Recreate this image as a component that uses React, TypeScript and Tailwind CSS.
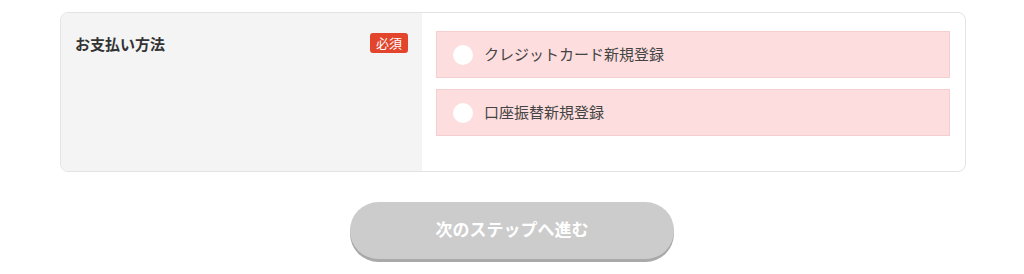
const font = "font-['Noto_Sans_CJK_JP','Noto_Sans',sans-serif]";

const options = ["クレジットカード新規登録", "口座振替新規登録"];

export default function App() {
  return (
    <div className={`h-[274px] w-[1024px] bg-white pt-3 ${font}`}>
      <div className="ml-[60px] flex h-[160px] w-[906px] overflow-hidden rounded-lg border border-[#e3e3e3]">
        <div className="flex w-[361px] shrink-0 items-start justify-between bg-[#f4f4f4] pl-[14px] pr-[14px] pt-[19px]">
          <span className="text-[15px] font-bold leading-[24px] text-[#333]">お支払い方法</span>
          <span className="mt-[1px] rounded-[3px] bg-[#e2452c] px-[6px] text-[13px] leading-[20px] text-white">
            必須
          </span>
        </div>
        <div className="flex flex-1 flex-col gap-[11px] pl-[14px] pr-[15px] pt-[18px]">
          {options.map((label) => (
            <label
              key={label}
              className="flex h-[47px] items-center border border-[#f5cfcf] bg-[#fddddd] pl-[16px]"
            >
              <span className="h-[20px] w-[20px] rounded-full bg-white" />
              <span className="ml-[11px] text-[15px] text-[#444]">{label}</span>
            </label>
          ))}
        </div>
      </div>
      <div className="flex justify-center pt-[30px]">
        <button className="h-[57px] w-[324px] rounded-full bg-[#cccccc] pb-[3px] text-[17px] font-bold text-white shadow-[0_3px_0_#a9a9a9]">
          次のステップへ進む
        </button>
      </div>
    </div>
  );
}
